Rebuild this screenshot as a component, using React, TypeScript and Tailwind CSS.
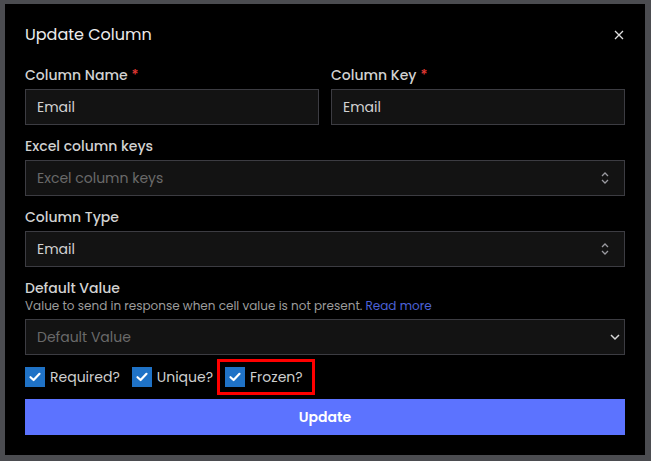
import React from "react";

const font = { fontFamily: "Poppins, Inter, 'Noto Sans', sans-serif" };

function Check() {
  return (
    <span className="flex h-[20px] w-[20px] items-center justify-center bg-[#1f72c6]">
      <svg width="14" height="14" viewBox="0 0 14 14" fill="none">
        <path d="M2.5 7.2 L5.6 10 L11.5 3.8" stroke="white" strokeWidth="2.2" strokeLinecap="round" strokeLinejoin="round" />
      </svg>
    </span>
  );
}

function UpDown() {
  return (
    <svg width="8" height="12" viewBox="0 0 8 12" fill="none">
      <path d="M1 4 L4 1 L7 4" stroke="#9a9aa0" strokeWidth="1.3" />
      <path d="M1 8 L4 11 L7 8" stroke="#9a9aa0" strokeWidth="1.3" />
    </svg>
  );
}

function Field({ label, req, children }: { label: string; req?: boolean; children: React.ReactNode }) {
  return (
    <div className="flex flex-col gap-[4px]">
      <div className="text-[14px] leading-[20px] font-medium text-[#d2d2d2]">
        {label}
        {req && <span className="ml-[4px] text-[#e53935]">*</span>}
      </div>
      {children}
    </div>
  );
}

const box = "flex h-[36px] items-center justify-between border border-[#3c3c42] bg-[#131313] px-[11px] text-[14px]";

export default function App() {
  return (
    <div className="h-[461px] w-[651px] bg-[#4b4c50] pl-[5px] pt-[4px]" style={font}>
      <div className="flex h-[451px] w-[640px] flex-col bg-black px-[20px] pt-[19px]">
        <div className="flex h-[24px] items-center justify-between">
          <span className="text-[16px] text-[#ececec]">Update Column</span>
          <svg width="10" height="10" viewBox="0 0 10 10" className="mr-[1px]">
            <path d="M1 1 L9 9 M9 1 L1 9" stroke="#e0e0e0" strokeWidth="1.3" />
          </svg>
        </div>
        <div className="mt-[18px] grid grid-cols-2 gap-x-[12px]">
          <Field label="Column Name" req>
            <div className={box}><span className="text-[#d2d2d2]">Email</span></div>
          </Field>
          <Field label="Column Key" req>
            <div className={box}><span className="text-[#d2d2d2]">Email</span></div>
          </Field>
        </div>
        <div className="mt-[11px]">
          <Field label="Excel column keys">
            <div className={box}>
              <span className="text-[#6a6a6a]">Excel column keys</span>
              <span className="mr-[4px]"><UpDown /></span>
            </div>
          </Field>
        </div>
        <div className="mt-[11px]">
          <Field label="Column Type">
            <div className={box}>
              <span className="text-[#d2d2d2]">Email</span>
              <span className="mr-[4px]"><UpDown /></span>
            </div>
          </Field>
        </div>
        <div className="mt-[11px] flex flex-col">
          <div className="text-[14px] leading-[20px] font-medium text-[#d2d2d2]">Default Value</div>
          <div className="text-[12px] leading-[16px] text-[#9c9c9c]">
            Value to send in response when cell value is not present. <span className="text-[#4c62d8]">Read more</span>
          </div>
          <div className="mt-[5px] flex h-[36px] items-center justify-between border border-[#3c3c42] bg-[#131313] pl-[11px] pr-[4px] text-[14px]">
            <span className="text-[#6a6a6a]">Default Value</span>
            <svg width="10" height="7" viewBox="0 0 10 7" fill="none">
              <path d="M1 1 L5 5 L9 1" stroke="#d8d8d8" strokeWidth="1.5" />
            </svg>
          </div>
        </div>
        <div className="mt-[12px] flex h-[20px] items-center text-[14px] text-[#cfcfcf]">
          <label className="flex items-center gap-[5px]"><Check />Required?</label>
          <label className="ml-[12px] flex items-center gap-[5px]"><Check />Unique?</label>
          <label className="relative ml-[12px] flex items-center gap-[5px]">
            <Check />Frozen?
            <span className="absolute -left-[8px] -right-[12px] -top-[8px] -bottom-[7px] border-[3px] border-[#ff0000]" />
          </label>
        </div>
        <button className="mt-[12px] h-[36px] w-full bg-[#5c73ff] text-[14px] font-semibold text-white">Update</button>
      </div>
    </div>
  );
}
